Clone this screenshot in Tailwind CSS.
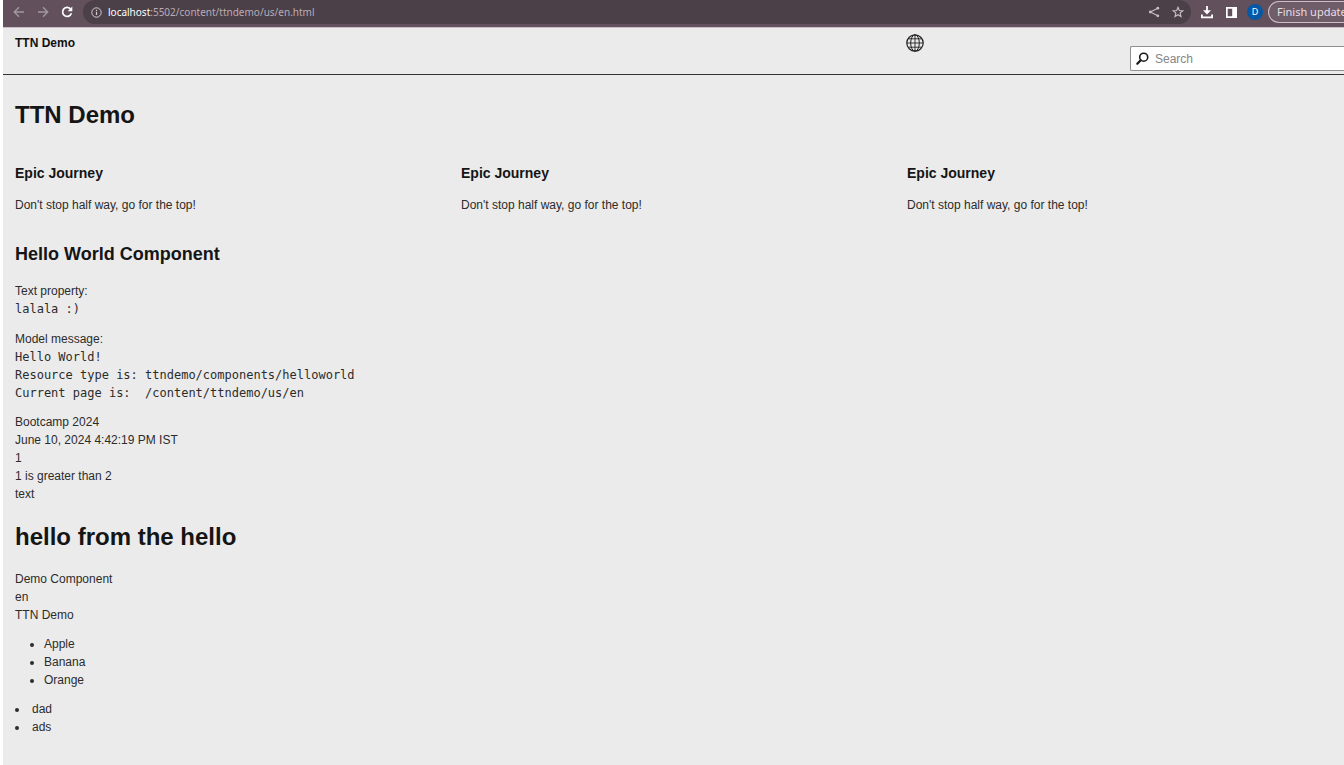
<!DOCTYPE html>
<html lang="en">
<head>
<meta charset="utf-8">
<title>TTN Demo</title>
<script src="https://cdn.jsdelivr.net/npm/@tailwindcss/browser@4"></script>
</head>
<body class="min-h-screen overflow-x-hidden bg-white pl-[3px] font-['Liberation_Sans',Arial,sans-serif] text-xs leading-[18px] text-[#2c2c2c]">
<div class="flex min-h-screen flex-col bg-[#ebebeb]">

  <!-- Browser toolbar -->
  <div class="flex h-7 items-start overflow-hidden border-b border-[#c9bcc6] bg-[#62505c] font-['Noto_Sans',sans-serif] text-[11px] text-[#e6dde3]">
    <div class="flex h-6 shrink-0 items-center gap-3 pr-[10px] pl-[10px]">
      <button type="button" aria-label="Back" class="text-[#a497a0]"><svg class="size-3" viewBox="0 0 12 12" fill="none" stroke="currentColor" stroke-width="1.4"><path d="M11 6H1.5M6 1.3 1.3 6 6 10.7"/></svg></button>
      <button type="button" aria-label="Forward" class="text-[#a497a0]"><svg class="size-3" viewBox="0 0 12 12" fill="none" stroke="currentColor" stroke-width="1.4"><path d="M1 6h9.500M6 1.300 10.700 6 6 10.700"/></svg></button>
      <button type="button" aria-label="Reload" class="text-white"><svg class="size-3" viewBox="0 0 12 12" fill="none" stroke="currentColor" stroke-width="1.700"><path d="M9.800 3.300A4.500 4.500 0 1 0 10.400 7.300"/><path d="M11.300 .6v4.600H6.700z" fill="currentColor" stroke="none"/></svg></button>
    </div>
    <div class="flex h-6 min-w-0 flex-1 items-center rounded-full bg-[#4b3f48] pr-[7px] pl-2">
      <svg class="mr-[6px] size-[11px] shrink-0 text-[#d5cbd2]" viewBox="0 0 11 11" fill="none" stroke="currentColor"><circle cx="5.500" cy="5.500" r="4.700"/><path d="M5.500 4.800v3.200M5.500 2.800v1.200" stroke-width="1.200"/></svg>
      <div class="flex-1 whitespace-nowrap text-[10px] text-[#b9adb5]"><span class="text-white">localhost</span>:5502/content/ttndemo/us/en.html</div>
      <button type="button" aria-label="Share" class="mr-3 text-[#c9bec6]"><svg class="size-3" viewBox="0 0 12 12" fill="currentColor"><path d="M9.800 2.200 2.300 6l7.500 3.800" fill="none" stroke="currentColor" stroke-width="1.100"/><circle cx="9.800" cy="2.200" r="1.400"/><circle cx="2.300" cy="6" r="1.400"/><circle cx="9.800" cy="9.800" r="1.400"/></svg></button>
      <button type="button" aria-label="Bookmark" class="text-[#c9bec6]"><svg class="size-3" viewBox="0 0 12 12" fill="none" stroke="currentColor" stroke-width="1.100"><path d="M6 1.300 7.300 4.500l3.500.3-2.700 2.200.9 3.500L6 8.700 3 10.500 3.900 7 1.200 4.800l3.500-.3z"/></svg></button>
    </div>
    <div class="flex h-6 shrink-0 items-center gap-3 pl-[9px]">
      <button type="button" aria-label="Downloads" class="text-white"><svg class="size-[14px]" viewBox="0 0 14 14" fill="none" stroke="currentColor" stroke-width="1.800"><path d="M7 1v6.500M1.900 9.500v2.800h10.200V9.500"/><path d="M3 5.300h8L7 9.600z" fill="currentColor" stroke="none"/></svg></button>
      <button type="button" aria-label="Side panel" class="text-white"><svg class="size-[11px]" viewBox="0 0 11 11"><path fill="currentColor" fill-rule="evenodd" d="M0 0h11v11H0zM1.700 1.700v7.600h4.500V1.700z"/></svg></button>
      <button type="button" aria-label="Profile" class="-ml-0.5 size-4 rounded-full bg-[#0458a5] text-[9px] leading-4 text-white">D</button>
      <button type="button" class="-ml-[7px] h-[22px] w-[76px] overflow-hidden rounded-l-full border border-r-0 border-[#cdbfc8] bg-[#705d6a] pl-2 text-left whitespace-nowrap">Finish update</button>
    </div>
  </div>

  <!-- Site header -->
  <header class="grid h-[47px] grid-cols-3 border-b border-[#333333]">
    <a href="#" class="pt-[6px] pl-3 font-bold text-[#111111]">TTN Demo</a>
    <div class="col-start-3 flex items-start justify-between pl-[9px]">
      <button type="button" aria-label="Language" class="mt-[6px] text-[#222222]"><svg class="size-[18px]" viewBox="0 0 18 18" fill="none" stroke="currentColor"><circle cx="9" cy="9" r="8.200" stroke-width="1.200"/><ellipse cx="9" cy="9" rx="4.300" ry="8.200"/><path d="M9 .8v16.400M.8 9h16.400M2.300 4.800h13.400M2.300 13.200h13.400" stroke-width=".9"/></svg></button>
      <label class="mt-[18px] flex h-[25px] w-[214px] items-center gap-[6px] rounded-l-[2px] border border-r-0 border-[#8f8f8f] bg-white pl-[5px]">
        <svg class="size-[13px] shrink-0" viewBox="0 0 13 13" fill="none" stroke="#181818"><circle cx="7.700" cy="5.200" r="4" stroke-width="1.600"/><path d="M4.700 8.200 1.300 11.700" stroke-width="2.200" stroke-linecap="round"/></svg>
        <input type="text" aria-label="Search" placeholder="Search" class="min-w-0 flex-1 bg-transparent outline-none placeholder:text-[#858585]">
      </label>
    </div>
  </header>

  <main class="flex-1 pb-7">
    <h1 class="px-3 pt-6 text-2xl leading-8 font-bold text-[#151515]">TTN Demo</h1>

    <div class="grid grid-cols-3 pt-8 pr-[3px]">
      <section class="px-3">
        <h3 class="text-sm leading-5 font-bold text-[#151515]">Epic Journey</h3>
        <p class="pt-[13px]">Don't stop half way, go for the top!</p>
      </section>
      <section class="px-3">
        <h3 class="text-sm leading-5 font-bold text-[#151515]">Epic Journey</h3>
        <p class="pt-[13px]">Don't stop half way, go for the top!</p>
      </section>
      <section class="px-3">
        <h3 class="text-sm leading-5 font-bold text-[#151515]">Epic Journey</h3>
        <p class="pt-[13px]">Don't stop half way, go for the top!</p>
      </section>
    </div>

    <section class="px-3 pt-7">
      <h2 class="text-lg leading-6 font-bold text-[#151515]">Hello World Component</h2>
      <div class="pt-4">
        <p>Text property:</p>
        <pre class="font-['DejaVu_Sans_Mono',monospace]">lalala :)</pre>
      </div>
      <div class="pt-3">
        <p>Model message:</p>
        <pre class="font-['DejaVu_Sans_Mono',monospace]">Hello World!
Resource type is: ttndemo/components/helloworld
Current page is:  /content/ttndemo/us/en</pre>
      </div>
    </section>

    <section class="px-3 pt-[11px]">
      <p>Bootcamp 2024</p>
      <p>June 10, 2024 4:42:19 PM IST</p>
      <p>1</p>
      <p>1 is greater than 2</p>
      <p>text</p>
      <h1 class="pt-[18px] text-2xl leading-8 font-bold text-[#151515]">hello from the hello</h1>
      <div class="pt-[17px]">
        <p>Demo Component</p>
        <p>en</p>
        <p>TTN Demo</p>
      </div>
      <ul class="list-disc pt-[11px] pl-[29px]">
        <li>Apple</li>
        <li>Banana</li>
        <li>Orange</li>
      </ul>
      <ul class="list-inside list-disc pt-[11px]">
        <li>dad</li>
        <li>ads</li>
      </ul>
    </section>
  </main>
</div>
</body>
</html>
